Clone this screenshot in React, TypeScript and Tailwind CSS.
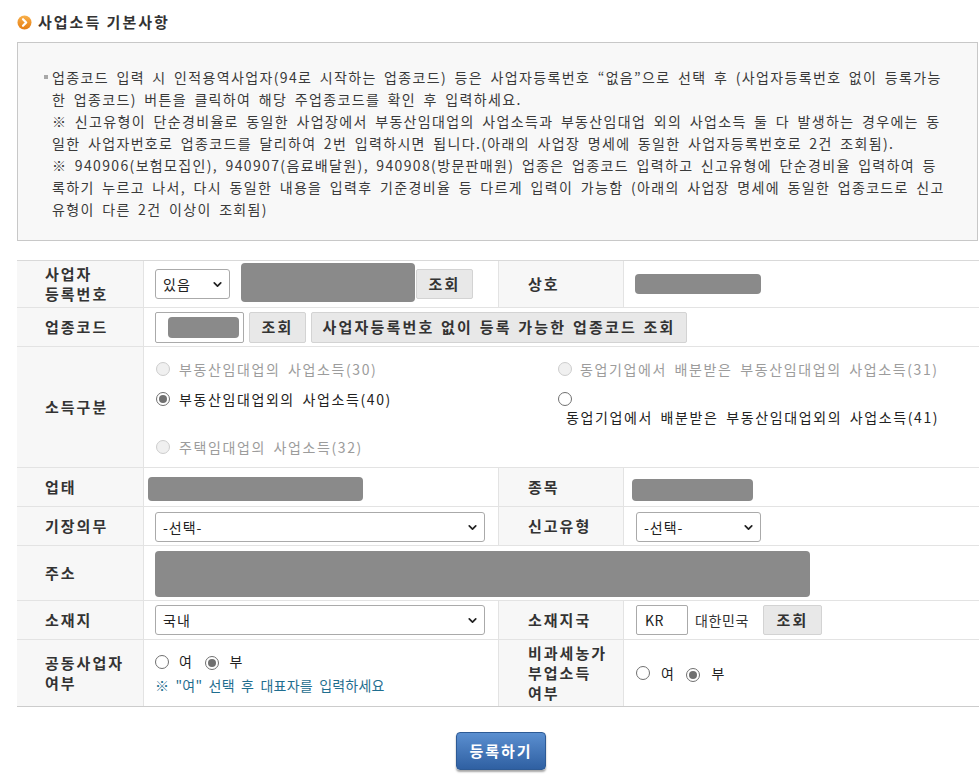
import React from 'react';
import { ChevronDown } from 'lucide-react';

function Radio({ checked, disabled }: { checked?: boolean; disabled?: boolean }) {
  if (disabled) {
    return <span className="inline-block w-[14px] h-[14px] rounded-full border border-[#cdcdcd] bg-[#f0f0f0] shrink-0" />;
  }
  return (
    <span className="inline-flex items-center justify-center w-[14px] h-[14px] rounded-full border border-[#707070] bg-white shrink-0">
      {checked && <span className="w-[8px] h-[8px] rounded-full bg-[#707070]" />}
    </span>
  );
}

function Select({ value, className }: { value: string; className: string }) {
  return (
    <div className={`flex items-center justify-between h-[30px] border border-[#aaaaaa] rounded-[3px] bg-white pl-[7px] pr-[5px] text-[14px] tracking-[1px] text-[#222] ${className}`}>
      <span>{value}</span>
      <ChevronDown size={13} strokeWidth={3.2} className="text-[#222]" />
    </div>
  );
}

function GrayButton({ children, className }: { children: React.ReactNode; className: string }) {
  return (
    <button className={`flex items-center justify-center bg-[#e8e8e8] border border-[#d3d3d3] rounded-[2px] text-[15px] font-bold tracking-[2.2px] [word-spacing:1px] text-[#333] ${className}`}>
      {children}
    </button>
  );
}

function Blank({ className }: { className: string }) {
  return <div className={`bg-[#8a8a8a] rounded-[4px] shrink-0 ${className}`} />;
}

function Label({ children, wide }: { children: React.ReactNode; wide?: boolean }) {
  return (
    <div
      className={`flex items-center shrink-0 bg-[#f7f7f7] border-r border-[#e3e3e3] text-[15px] font-bold leading-[20px] tracking-[2px] text-[#333] ${
        wide ? 'w-[125px] pl-[29px]' : 'w-[127px] pl-[28px]'
      }`}
    >
      <div>{children}</div>
    </div>
  );
}

function Row({ h, last, children }: { h: string; last?: boolean; children: React.ReactNode }) {
  return <div className={`flex border-b ${last ? 'border-[#cccccc]' : 'border-[#e3e3e3]'} ${h}`}>{children}</div>;
}

const infoLines = [
  '한 업종코드) 버튼을 클릭하여 해당 주업종코드를 확인 후 입력하세요.',
  '※ 신고유형이 단순경비율로 동일한 사업장에서 부동산임대업의 사업소득과 부동산임대업 외의 사업소득 둘 다 발생하는 경우에는 동',
  '일한 사업자번호로 업종코드를 달리하여 2번 입력하시면 됩니다.(아래의 사업장 명세에 동일한 사업자등록번호로 2건 조회됨).',
  '※ 940906(보험모집인), 940907(음료배달원), 940908(방문판매원) 업종은 업종코드 입력하고 신고유형에 단순경비율 입력하여 등',
  '록하기 누르고 나서, 다시 동일한 내용을 입력후 기준경비율 등 다르게 입력이 가능함 (아래의 사업장 명세에 동일한 업종코드로 신고',
  '유형이 다른 2건 이상이 조회됨)',
];

export default function App() {
  return (
    <div className="min-h-[777px] bg-white pl-[17px] pt-[13px] font-['Noto_Sans_CJK_KR',sans-serif] text-[#333]">
      {/* title */}
      <div className="flex items-center h-[18px]">
        <svg width="15" height="15" viewBox="0 0 15 15" className="shrink-0">
          <defs>
            <linearGradient id="og" x1="0" y1="0" x2="0" y2="1">
              <stop offset="0" stopColor="#f9b04a" />
              <stop offset="1" stopColor="#e57d12" />
            </linearGradient>
          </defs>
          <circle cx="7.5" cy="7.5" r="7" fill="url(#og)" />
          <path d="M6 4.2 L9.2 7.5 L6 10.8" stroke="#fff" strokeWidth="2.2" fill="none" strokeLinecap="round" strokeLinejoin="round" />
        </svg>
        <h2 className="ml-[6px] text-[15px] font-bold tracking-[2px] text-[#333]">사업소득 기본사항</h2>
      </div>

      {/* info box */}
      <div className="mt-[11px] w-[961px] border border-[#c8c8c8] bg-[#f8f8f8] pl-[26px] pt-[23px] pb-[20px] text-[14px] leading-[22px] tracking-[1.35px] [word-spacing:3px] text-[#3a3a3a]">
        <div className="flex whitespace-nowrap">
          <span className="w-[8px] h-[22px] shrink-0 flex items-center">
            <span className="block w-[4px] h-[4px] bg-[#a8a8a8]" />
          </span>
          <div>
            <div>업종코드 입력 시 인적용역사업자(94로 시작하는 업종코드) 등은 사업자등록번호 “없음”으로 선택 후 (사업자등록번호 없이 등록가능</div>
            {infoLines.map((l) => (
              <div key={l}>{l}</div>
            ))}
          </div>
        </div>
      </div>

      {/* form table */}
      <div className="mt-[19px] w-[962px] border-t border-[#d9d9d9] text-[14px] tracking-[1.6px] [word-spacing:3px]">
        <Row h="h-[47px]">
          <Label>
            사업자
            <br />
            등록번호
          </Label>
          <div className="flex items-center w-[355px] shrink-0 border-r border-[#e3e3e3] pl-[11px]">
            <Select value="있음" className="w-[75px]" />
            <Blank className="ml-[11px] w-[174px] h-[39px] -mt-[4px]" />
            <GrayButton className="ml-[1px] w-[57px] h-[30px]">조회</GrayButton>
          </div>
          <Label wide>상호</Label>
          <div className="flex items-center w-[355px] shrink-0 pl-[11px]">
            <Blank className="w-[126px] h-[20px]" />
          </div>
        </Row>

        <Row h="h-[39px]">
          <Label>업종코드</Label>
          <div className="flex items-center flex-1 pl-[11px]">
            <div className="flex items-center w-[89px] h-[31px] border border-[#aaaaaa] rounded-[2px] bg-white">
              <Blank className="ml-[12px] w-[71px] h-[21px]" />
            </div>
            <GrayButton className="ml-[5px] w-[57px] h-[31px]">조회</GrayButton>
            <GrayButton className="ml-[5px] w-[376px] h-[31px]">사업자등록번호 없이 등록 가능한 업종코드 조회</GrayButton>
          </div>
        </Row>

        <Row h="h-[121px]">
          <Label>소득구분</Label>
          <div className="flex-1 pl-[12px] pt-[7px]">
            <div className="grid grid-cols-[402px_1fr] leading-[18px]">
              <div className="flex items-center gap-[9px] py-[6px] text-[#9c9c9c]">
                <Radio disabled />
                <span>부동산임대업의 사업소득(30)</span>
              </div>
              <div className="flex items-center gap-[8px] py-[6px] text-[#9c9c9c]">
                <Radio disabled />
                <span>동업기업에서 배분받은 부동산임대업의 사업소득(31)</span>
              </div>
              <div className="flex items-start gap-[9px] py-[6px] text-[#222]">
                <span className="h-[18px] flex items-center">
                  <Radio checked />
                </span>
                <span>부동산임대업외의 사업소득(40)</span>
              </div>
              <div className="py-[6px] text-[#222]">
                <div className="h-[18px] flex items-center">
                  <Radio />
                </div>
                <div className="pl-[8px]">동업기업에서 배분받은 부동산임대업외의 사업소득(41)</div>
              </div>
              <div className="flex items-center gap-[9px] py-[6px] text-[#9c9c9c]">
                <Radio disabled />
                <span>주택임대업의 사업소득(32)</span>
              </div>
            </div>
          </div>
        </Row>

        <Row h="h-[39px]">
          <Label>업태</Label>
          <div className="flex items-center w-[355px] shrink-0 border-r border-[#e3e3e3] pl-[4px]">
            <Blank className="w-[215px] h-[24px] mt-[3px]" />
          </div>
          <Label wide>종목</Label>
          <div className="flex items-center w-[355px] shrink-0 pl-[8px]">
            <Blank className="w-[121px] h-[22px] mt-[6px]" />
          </div>
        </Row>

        <Row h="h-[39px]">
          <Label>기장의무</Label>
          <div className="flex items-center w-[355px] shrink-0 border-r border-[#e3e3e3] pl-[11px]">
            <Select value="-선택-" className="w-[330px] mt-[2px]" />
          </div>
          <Label wide>신고유형</Label>
          <div className="flex items-center w-[355px] shrink-0 pl-[12px]">
            <Select value="-선택-" className="w-[125px] mt-[2px]" />
          </div>
        </Row>

        <Row h="h-[55px]">
          <Label>주소</Label>
          <div className="flex items-center flex-1 pl-[11px]">
            <Blank className="w-[655px] h-[46px] mt-[2px]" />
          </div>
        </Row>

        <Row h="h-[39px]">
          <Label>소재지</Label>
          <div className="flex items-center w-[355px] shrink-0 border-r border-[#e3e3e3] pl-[11px]">
            <Select value="국내" className="w-[330px]" />
          </div>
          <Label wide>소재지국</Label>
          <div className="flex items-center w-[355px] shrink-0 pl-[12px]">
            <div className="flex items-center w-[52px] h-[30px] border border-[#aaaaaa] rounded-[2px] bg-white pl-[8px] text-[#222] tracking-[0.5px]">KR</div>
            <span className="ml-[7px] text-[#333] tracking-[0.6px]">대한민국</span>
            <GrayButton className="ml-[14px] w-[59px] h-[30px]">조회</GrayButton>
          </div>
        </Row>

        <Row h="h-[67px]" last>
          <Label>
            공동사업자
            <br />
            여부
          </Label>
          <div className="flex flex-col justify-center w-[355px] shrink-0 border-r border-[#e3e3e3] pl-[11px] pt-[1px]">
            <div className="flex items-center h-[22px] text-[#222]">
              <Radio />
              <span className="ml-[10px]">여</span>
              <span className="ml-[12px]">
                <Radio checked />
              </span>
              <span className="ml-[10px]">부</span>
            </div>
            <div className="h-[24px] leading-[24px] text-[#1f6e8f] tracking-[0.2px]">※ "여" 선택 후 대표자를 입력하세요</div>
          </div>
          <Label wide>
            비과세농가
            <br />
            부업소득
            <br />
            여부
          </Label>
          <div className="flex items-center w-[355px] shrink-0 pl-[12px] text-[#222]">
            <Radio />
            <span className="ml-[11px]">여</span>
            <span className="ml-[11px]">
              <Radio checked />
            </span>
            <span className="ml-[11px]">부</span>
          </div>
        </Row>
      </div>

      {/* submit */}
      <div className="w-[962px] flex justify-center pl-[6px] mt-[25px]">
        <button className="w-[90px] h-[38px] rounded-[4px] border border-[#2d5a95] bg-gradient-to-b from-[#5b8fd0] to-[#2f60a2] shadow-[0_2px_2px_rgba(0,0,0,0.35)] text-white text-[15px] font-bold tracking-[2px]">
          등록하기
        </button>
      </div>
    </div>
  );
}
